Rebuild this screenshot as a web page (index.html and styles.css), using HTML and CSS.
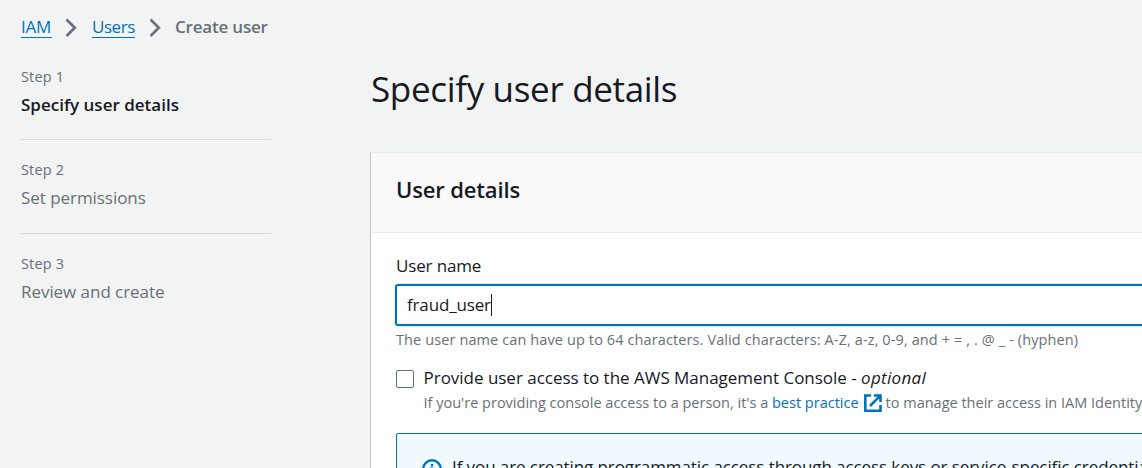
FILE: index.html
```html
<!DOCTYPE html>
<html lang="en">
<head>
<meta charset="utf-8">
<title>Create user | IAM</title>
<link rel="stylesheet" href="styles.css">
</head>
<body>
<div class="page">
  <aside class="sidebar">
    <nav class="breadcrumbs">
      <a class="crumb" href="#">IAM</a>
      <svg class="chevron" viewBox="0 0 12 20"><path d="M1.5 1.5 9.8 9.8 1.5 18"/></svg>
      <a class="crumb crumb-users" href="#">Users</a>
      <svg class="chevron" viewBox="0 0 12 20"><path d="M1.5 1.5 9.8 9.8 1.5 18"/></svg>
      <span class="crumb-current">Create user</span>
    </nav>
    <ol class="steps">
      <li class="step"><span class="step-number">Step 1</span><span class="step-name active">Specify user details</span></li>
      <li class="step"><span class="step-number">Step 2</span><span class="step-name">Set permissions</span></li>
      <li class="step"><span class="step-number">Step 3</span><span class="step-name">Review and create</span></li>
    </ol>
  </aside>
  <main class="main">
    <h1 class="title">Specify user details</h1>
    <section class="card">
      <header class="card-header"><h2 class="card-title">User details</h2></header>
      <div class="card-body">
        <label class="label">User name</label>
        <div class="input"><span class="value">fraud_user</span><span class="caret"></span></div>
        <p class="hint">The user name can have up to 64 characters. Valid characters: A-Z, a-z, 0-9, and + = , . @ _ - (hyphen)</p>
        <div class="check-row">
          <span class="checkbox"></span>
          <div class="check-text">
            <div class="check-label"><span class="check-main">Provide user access to the AWS Management Console - </span><em class="optional">optional</em></div>
            <div class="check-hint"><span>If you're providing console access to a person, it's a </span><a class="link" href="#">best practice</a><svg class="external" viewBox="0 0 18 18"><path d="M7 1.5H1.3v15.2h15.2V11M10 1.5h6.5V8M16.3 1.7 6 12"/></svg><span class="check-rest">to manage their access in IAM Identity</span></div>
          </div>
        </div>
        <div class="alert">
          <svg class="info" viewBox="0 0 20 20"><circle cx="10" cy="10" r="8.75"/><path d="M10 5v2.4M7.5 9.6H10V15M7.5 15h5"/></svg>
          <span class="alert-text">If you are creating programmatic access through access keys or service-specific credentials</span>
        </div>
      </div>
    </section>
  </main>
</div>
</body>
</html>
```
FILE: styles.css
```css
* { box-sizing: border-box; }
body {
  margin: 0;
  height: 468px;
  overflow: hidden;
  background: #f2f3f3;
  color: #16191f;
  font: 17px/28px "Open Sans", "Noto Sans", sans-serif;
}
.page { display: flex; height: 468px; overflow: hidden; white-space: nowrap; }
.sidebar { flex: 0 0 370px; padding: 14px 0 0 21px; }
.breadcrumbs { display: flex; align-items: flex-start; height: 48px; line-height: 26px; }
.crumb { height: 24px; color: #0073bb; text-decoration: none; line-height: 25px; border-bottom: 1px solid #0073bb; letter-spacing: -0.3px; width: 31px; }
.crumb-users { width: 43px; letter-spacing: -0.45px; }
.chevron { width: 12px; height: 20px; margin: 4px 15px 0 13px; fill: none; stroke: #687078; stroke-width: 2.7; }
.crumb-users + .chevron { margin: 4px 14px 0 14px; }
.crumb-current { color: #687078; font-weight: 600; letter-spacing: -0.2px; }
.steps { list-style: none; margin: 0; padding: 0; width: 250px; }
.step { display: flex; flex-direction: column; height: 94px; padding-top: 19px; border-top: 1px solid #d5dbdb; }
.step:first-child { height: 77px; padding-top: 4px; border-top: 0; }
.step-number { font-size: 14.5px; line-height: 22px; color: #687078; letter-spacing: 0.15px; }
.step-name { margin-top: 3px; color: #687078; letter-spacing: -0.05px; }
.step-name.active { color: #16191f; font-weight: 600; letter-spacing: 0; }
.main { flex: 0 0 772px; min-width: 0; padding-top: 64px; }
.title { margin: 0 0 0 1px; height: 88px; font-size: 35px; line-height: 49px; font-weight: 400; letter-spacing: -0.33px; }
.card { height: 400px; margin-right: -100px; background: #fff; border-top: 1px solid #eaeded; border-left: 1px solid #bcc1c1; }
.card-header { height: 80px; padding: 21px 25px; background: #fafafa; border-bottom: 1px solid #eaeded; }
.card-title { margin: 0; font-size: 22px; line-height: 30px; font-weight: 600; letter-spacing: -0.15px; }
.card-body { padding: 19px 25px 0; }
.label { display: block; letter-spacing: -0.15px; }
.input { display: flex; align-items: center; height: 42px; margin: 4px -1px 0; padding-left: 10px; border: 2px solid #0073bb; border-radius: 3px; box-shadow: 0 0 0 1px #d9edf7; }
.value { letter-spacing: -0.15px; }
.caret { width: 1px; height: 22px; background: #16191f; }
.hint { margin: 3px 0 0; font-size: 14.5px; line-height: 22px; color: #687078; letter-spacing: 0.11px; }
.check-row { display: flex; margin-top: 13px; }
.checkbox { width: 18px; height: 18px; margin-top: 6px; border: 1.5px solid #687078; border-radius: 2px; }
.check-text { margin-left: 9.5px; }
.check-label { display: flex; white-space: pre; }
.check-main { letter-spacing: -0.02px; }
.optional { letter-spacing: 0.3px; }
.check-hint { display: flex; align-items: center; height: 22px; white-space: pre; font-size: 14.5px; line-height: 22px; color: #687078; }
.link { color: #0073bb; text-decoration: none; }
.external { width: 18px; height: 18px; margin: 0 4px 0 5px; fill: none; stroke: #0073bb; stroke-width: 2.6; }
.alert { display: flex; height: 80px; margin-top: 19px; padding: 19px 25px; background: #f1faff; border: 1px solid #0073bb; border-radius: 2px; }
.info { flex: none; width: 20px; height: 20px; margin-top: 6px; fill: none; stroke: #0073bb; stroke-width: 2.4; }
.alert-text { margin-left: 10px; letter-spacing: -0.09px; }
```
